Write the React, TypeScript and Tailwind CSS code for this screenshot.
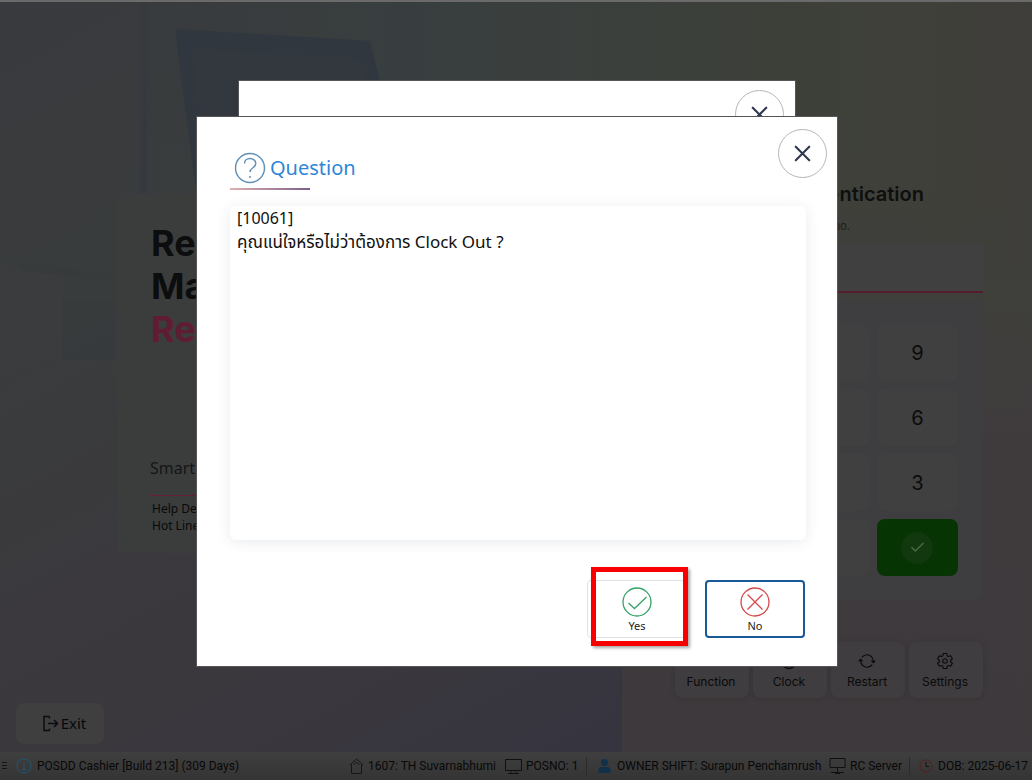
import type { ReactNode } from "react";
import { Clock, Menu, Check, X } from "lucide-react";
import { IoSettingsOutline, IoSyncOutline } from "react-icons/io5";

const keys = ["7", "8", "9", "4", "5", "6", "1", "2", "3", "0", "C"];

const actions: { label: string; icon: ReactNode }[] = [
  { label: "Function", icon: <Menu size={18} /> },
  { label: "Clock", icon: <Clock size={18} /> },
  { label: "Restart", icon: <IoSyncOutline size={18} stroke="currentColor" strokeWidth={14} /> },
  { label: "Settings", icon: <IoSettingsOutline size={18} stroke="currentColor" strokeWidth={14} /> },
];

function Backdrop() {
  return (
    <svg className="absolute inset-0 h-full w-full" viewBox="0 0 1032 780" preserveAspectRatio="none" aria-hidden="true">
      <defs>
        <linearGradient id="base" x1="0" y1="0" x2="0.7" y2="1">
          <stop offset="0" stopColor="#393a3d" />
          <stop offset="0.3" stopColor="#393c3d" />
          <stop offset="0.55" stopColor="#3b393d" />
          <stop offset="0.75" stopColor="#3a373e" />
          <stop offset="1" stopColor="#33333f" />
        </linearGradient>
        <linearGradient id="top" x1="0" y1="0" x2="1" y2="0">
          <stop offset="0.1" stopColor="#393e3f" stopOpacity="0" />
          <stop offset="0.4" stopColor="#383e3f" />
          <stop offset="0.75" stopColor="#3d4039" />
          <stop offset="0.9" stopColor="#3f403a" />
          <stop offset="1" stopColor="#3f3d3a" />
        </linearGradient>
        <linearGradient id="right" x1="0" y1="0" x2="0" y2="1">
          <stop offset="0" stopColor="#3f403a" stopOpacity="0" />
          <stop offset="0.3" stopColor="#3f3f3b" />
          <stop offset="0.5" stopColor="#3f3b3d" />
          <stop offset="1" stopColor="#3e393c" />
        </linearGradient>
      </defs>
      <rect width="1032" height="780" fill="url(#base)" />
      <rect width="1032" height="300" fill="url(#top)" />
      <rect x="622" y="100" width="410" height="680" fill="url(#right)" />
      <path d="M175 29 L370 41 L392 130 L420 300 L210 300 Z" fill="#30373f" />
      <path d="M190 48 L360 58 L380 180 L210 180 Z" fill="#32383e" />
      <path d="M140 4h7v190h-7z" fill="#34383f" opacity="0.5" />
      <path d="M0 265 L62 275 L62 358 L0 378 Z" fill="#3d3d3f" opacity="0.35" />
      <path d="M20 262 L115 275 V282 L20 270 Z M62 300h53v60h-53z" fill="#35373b" opacity="0.25" />
    </svg>
  );
}

function Hero() {
  return (
    <section className="mt-[193px] ml-[118px] h-[358px] bg-[#3b3d3d] pt-[26px] pl-8">
      <h1 className="pt-px pl-px font-['Inter'] text-[36px] leading-[43px] font-bold text-[#0c0d0f]">
        Restaurant
        <br />
        Management
        <br />
        <span className="text-[#601c33]">Reimagined</span>
      </h1>
      <p className="mt-[105px] text-base leading-6 text-[#141517]">Smart POS</p>
      <div className="mt-[15px] h-px w-40 bg-[#661f36]" />
      <p className="mt-[4px] pl-[2px] text-[12px] leading-[17px] text-[#09090a]">
        Help Desk
        <br />
        Hot Line
      </p>
    </section>
  );
}

function SignIn() {
  return (
    <section className="mr-[49px] ml-[53px] pt-[176px]">
      <h2 className="pr-[59px] text-right font-['Inter'] text-[20px] leading-8 font-semibold text-[#0e0f0e]">
        Staff Authentication
      </h2>
      <p className="mt-[6px] pr-[133px] text-right font-['Inter'] text-[11px] leading-5 text-[#1c1d1b]">
        Please enter staff no.
      </p>
      <input
        aria-label="Staff number"
        className="mt-2 block h-[49px] w-full border-b-2 border-[#541c2d] bg-[#404041] px-3 text-[#111] outline-none"
      />
      <div className="mt-[7px] grid grid-cols-3 gap-2 rounded-lg bg-[#3e3d3f] py-6 pr-[25px] pl-[23px]">
        {keys.map((k) => (
          <button key={k} className="h-[57px] rounded-lg bg-[#404040] font-['Inter'] text-[20px] text-[#0c0c0c]">
            {k}
          </button>
        ))}
        <button aria-label="Confirm" className="flex h-[57px] items-center justify-center rounded-lg bg-[#073403]">
          <span className="flex size-8 items-center justify-center rounded-full bg-[#12380f]">
            <Check size={17} strokeWidth={2} className="text-[#4b6a49]" />
          </span>
        </button>
      </div>
      <div className="mt-[42px] grid grid-cols-4 gap-1">
        {actions.map((a) => (
          <button
            key={a.label}
            className="flex h-[56px] flex-col items-center justify-center gap-[2px] rounded-lg bg-[#3f3d3f] pt-1 pr-[2px] font-['Inter'] text-[12px] leading-5 text-[#0a0a0a] shadow-[0_1px_4px_#363336]"
          >
            {a.icon}
            {a.label}
          </button>
        ))}
      </div>
    </section>
  );
}

function StatusBar() {
  return (
    <footer className="relative flex h-7 shrink-0 items-center bg-linear-to-b from-[#3f3f3f] to-[#343434] font-['Roboto'] text-[12px] whitespace-nowrap text-[#080808]">
      <svg className="mr-2 w-2" height="10" viewBox="0 0 8 10" stroke="#151515">
        <path d="M2 1.500h5M2 4.500h5M2 7.500h5" />
      </svg>
      <div className="flex w-[333px] items-center gap-[5px]">
        <svg width="16" height="16" viewBox="0 0 16 16" fill="none" stroke="#1e5878">
          <circle cx="8" cy="8" r="7" />
          <path d="M8 7v5M8 4v1.500M6.500 12h3" />
        </svg>
        POSDD Cashier [Build 213] (309 Days)
      </div>
      <div className="flex w-[156px] items-center gap-1">
        <svg width="15" height="18" viewBox="0 0 15 18" fill="none" stroke="#151515">
          <path d="M1 8 7.500 2 14 8M2.500 7.500V16.500h10V7.500M4.500 8 7.500 5l3 3" />
        </svg>
        1607: TH Suvarnabhumi
      </div>
      <div className="flex w-[81px] items-center gap-1">
        <svg width="17" height="17" viewBox="0 0 17 17" fill="none" stroke="#101010">
          <path d="M.5 1.500h16v11H.5zM6 12.500v2M11 12.500v2M3 15.500h11" />
        </svg>
        POSNO: 1
      </div>
      <div className="flex w-[243px] items-center gap-[6px] border-l border-[#2a2a2a] pl-[11px]">
        <svg width="13" height="16" viewBox="0 0 13 16" fill="#12304a">
          <circle cx="6.500" cy="4.500" r="3.500" />
          <path d="M.5 15v-3.500q0-2 3-2.500h6q3 .5 3 2.500V15z" />
        </svg>
        OWNER SHIFT: Surapun Penchamrush
      </div>
      <div className="flex w-[80px] items-center gap-1">
        <svg width="17" height="18" viewBox="0 0 17 18" fill="none" stroke="#101010">
          <path d="M1 1.500h15v9H1zM8.500 10.500v5M2 15.500h13M6 16.500h5" />
        </svg>
        RC Server
      </div>
      <div className="flex items-center gap-[5px] border-l border-[#2a2a2a] pl-[9px]">
        <svg width="14" height="14" viewBox="0 0 14 14" fill="none" stroke="#5a1c1c">
          <circle cx="7" cy="7" r="6" />
          <path d="M7 3v4.500h3" stroke="#151010" />
        </svg>
        DOB: 2025-06-17
      </div>
    </footer>
  );
}

function CloseButton() {
  return (
    <button
      aria-label="Close"
      className="flex size-[49px] items-center justify-center rounded-full border border-[#b4b6ba] bg-white text-[#303850]"
    >
      <X size={27} strokeWidth={1.9} />
    </button>
  );
}

function QuestionDialog() {
  return (
    <div
      role="dialog"
      aria-labelledby="dialog-title"
      className="relative flex w-[642px] flex-col border border-[#555] bg-white pb-[28px]"
    >
      <header className="flex items-start justify-between pt-3 pr-[10px] pl-[33px]">
        <div className="pt-5">
          <h2 id="dialog-title" className="flex h-[39px] items-center gap-1 pl-1 text-[20px] text-[#2f86d8]">
            <svg width="32" height="32" viewBox="0 0 32 32" fill="none" stroke="#5f8fb5" strokeWidth="1.400">
              <circle cx="16" cy="16" r="14.500" />
              <path d="M10.500 11.500c0-3 2.500-5 5.500-5s5.800 2 5.800 5c0 4.500-5.800 4-5.800 8.500" />
              <circle cx="16" cy="25" r="1" fill="#5f8fb5" stroke="none" />
            </svg>
            Question
          </h2>
          <div className="h-[2px] w-20 bg-linear-to-r from-[#dfb0b0] to-[#7f6089]" />
        </div>
        <CloseButton />
      </header>
      <div className="mt-4 mr-[31px] ml-[33px] h-[334px] rounded-md bg-white px-[7px] text-[#101010] shadow-[0_2px_14px_rgba(40,60,90,0.10)]">
        <p className="text-base leading-6">[10061]</p>
        <p lang="th" className="text-[17px] leading-6">
          คุณแน่ใจหรือไม่ว่าต้องการ Clock Out ?
        </p>
      </div>
      <div className="mt-10 mr-8 flex justify-end gap-[18px]">
        <div className="relative">
          <button className="flex h-[58px] w-[100px] flex-col items-center justify-center gap-px rounded border border-[#dfe2e4] pt-1 text-[11px] leading-4 text-[#222]">
            <svg width="30" height="30" viewBox="0 0 30 30" fill="none" stroke="#36a269" strokeWidth="1.300">
              <circle cx="15" cy="15" r="14" />
              <path d="m6.500 16 6 5.500L24.500 10" />
            </svg>
            Yes
          </button>
          <span className="pointer-events-none absolute -top-[13px] -right-px -bottom-[8px] left-1 border-[5px] border-[#f80000] shadow-[2px_2px_3px_rgba(0,0,0,0.35)]" />
        </div>
        <button className="flex h-[58px] w-[100px] flex-col items-center justify-center gap-px rounded border-2 border-[#175a97] pt-1 text-[11px] leading-4 text-[#222]">
          <svg width="30" height="30" viewBox="0 0 30 30" fill="none" stroke="#d84747" strokeWidth="1.300">
            <circle cx="15" cy="15" r="14" />
            <path d="m7.500 7.500 15 15m0-15-15 15" />
          </svg>
          No
        </button>
      </div>
    </div>
  );
}

export default function App() {
  return (
    <div className="relative flex min-h-screen flex-col overflow-hidden bg-[#3a3a3d] font-['Noto_Sans','Noto_Sans_Thai',sans-serif]">
      <Backdrop />
      <div className="relative h-[2px] shrink-0 bg-[#6a6a6a]" />
      <main className="relative grid flex-1 grid-cols-[622fr_410fr]">
        <div className="flex flex-col">
          <Hero />
          <button className="mt-auto mb-2 ml-4 flex h-[41px] w-[88px] items-center justify-center gap-[2px] rounded-lg bg-[#3f3f40] pl-2 text-[15px] text-[#08080a]">
            <svg width="17" height="17" viewBox="0 0 17 17" fill="none" stroke="#0c0c10" strokeWidth="1.500">
              <path d="M7.500 1.500H2v14h5.500M7.500 1.500v2M7.500 13.500v2M6 8.500h9.500M12 5l3.500 3.500L12 12" />
            </svg>
            Exit
          </button>
        </div>
        <SignIn />
      </main>
      <StatusBar />
      <div className="absolute inset-0 flex items-center justify-center pt-[2px] pl-[2px]">
        <div className="relative">
          <div className="absolute inset-x-[42px] -top-9 flex h-[500px] justify-end border border-[#555] bg-white pt-[9px] pr-[11px]">
            <CloseButton />
          </div>
          <QuestionDialog />
        </div>
      </div>
    </div>
  );
}
